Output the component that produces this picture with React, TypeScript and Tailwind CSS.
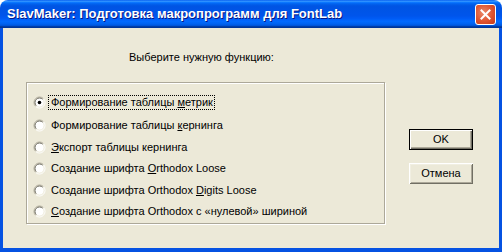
import React from "react";

function Radio({ checked, id }: { checked?: boolean; id: string }) {
  return (
    <svg width="13" height="13" viewBox="0 0 13 13" className="shrink-0">
      <defs>
        <linearGradient id={`o${id}`} x1="0" y1="0" x2="1" y2="1">
          <stop offset="0.45" stopColor="#aca899" />
          <stop offset="0.55" stopColor="#ffffff" />
        </linearGradient>
        <linearGradient id={`i${id}`} x1="0" y1="0" x2="1" y2="1">
          <stop offset="0.45" stopColor="#716f64" />
          <stop offset="0.55" stopColor="#f1efe2" />
        </linearGradient>
      </defs>
      <circle cx="6.5" cy="6.5" r="5.5" fill="none" stroke={`url(#o${id})`} strokeWidth="1" />
      <circle cx="6.5" cy="6.5" r="4.5" fill="#ffffff" stroke={`url(#i${id})`} strokeWidth="1" />
      {checked && <circle cx="6.5" cy="6.5" r="1.8" fill="#000" />}
    </svg>
  );
}

const rows: { mt: string; content: React.ReactNode; checked?: boolean; focus?: boolean }[] = [
  { mt: "mt-[12px]", checked: true, focus: true, content: <>Формирование таблицы <u>м</u>етрик</> },
  { mt: "mt-[9px]", content: <>Формирование таблицы <u>к</u>ернинга</> },
  { mt: "mt-[8px]", content: <><u>Э</u>кспорт таблицы кернинга</> },
  { mt: "mt-[7px]", content: <>Создание шрифта <u>O</u>rthodox Loose</> },
  { mt: "mt-[8px]", content: <>Создание шрифта Orthodox <u>D</u>igits Loose</> },
  { mt: "mt-[7px]", content: <><u>С</u>оздание шрифта Orthodox с «нулевой» шириной</> },
];

export default function App() {
  return (
    <div className="w-[502px] h-[252px] flex flex-col rounded-t-[8px] overflow-hidden font-['Liberation_Sans',Arial,sans-serif]">
      <div className="h-[28px] shrink-0 flex items-center justify-between pl-[7px] pr-[6px] bg-[linear-gradient(to_bottom,#0058ee_0%,#3593ff_4%,#288eff_6%,#127dff_8%,#036ffc_10%,#0262ee_14%,#0057e5_20%,#0054e3_24%,#0055eb_56%,#005bf5_66%,#026afe_76%,#0062ef_86%,#0052d6_92%,#0040ab_94%,#003092_100%)]">
        <span className="text-white text-[13px] font-bold leading-[16px] [text-shadow:1px_1px_#0a1883]">
          SlavMaker: Подготовка макропрограмм для FontLab
        </span>
        <div className="w-[21px] h-[21px] rounded-[3px] border border-white flex items-center justify-center bg-[radial-gradient(circle_at_40%_40%,#e98a6c_0%,#e0532f_55%,#c2391c_100%)]">
          <svg width="11" height="11" viewBox="0 0 11 11">
            <path d="M1.5 1.5 L9.5 9.5 M9.5 1.5 L1.5 9.5" stroke="#fff" strokeWidth="2" strokeLinecap="square" />
          </svg>
        </div>
      </div>
      <div className="flex-1 flex bg-[#ece9d8] border-l-[3px] border-r-[3px] border-b-[4px] border-[#0552e2] text-black text-[11px] leading-[13px]">
        <div className="pl-[23px] flex flex-col">
          <div className="mt-[23px] h-[13px] pl-[103px] whitespace-nowrap">Выберите нужную функцию:</div>
          <div className="mt-[18px] w-[359px] h-[142px] border border-[#aca899] shadow-[inset_1px_1px_0_#ffffff,1px_1px_0_#ffffff] flex flex-col">
            {rows.map((r, i) => (
              <div key={i} className={`${r.mt} h-[14px] flex items-center pl-[6px]`}>
                <Radio checked={r.checked} id={`r${i}`} />
                <span
                  className={`ml-[2px] pl-[2px] pr-[1px] h-[15px] leading-[13px] whitespace-nowrap border ${
                    r.focus ? "border-dotted border-black" : "border-transparent"
                  }`}
                >
                  {r.content}
                </span>
              </div>
            ))}
          </div>
        </div>
        <div className="ml-[24px] mt-[101px] flex flex-col">
          <div className="w-[64px] h-[21px] border border-black">
            <div className="w-full h-full flex items-center justify-center shadow-[inset_1px_1px_0_#ffffff,inset_-1px_-1px_0_#716f64,inset_-2px_-2px_0_#aca899]">
              OK
            </div>
          </div>
          <div className="mt-[13px] w-[64px] h-[21px] flex items-center justify-center shadow-[inset_1px_1px_0_#ffffff,inset_-1px_-1px_0_#716f64,inset_2px_2px_0_#f1efe2,inset_-2px_-2px_0_#aca899]">
            Отмена
          </div>
        </div>
      </div>
    </div>
  );
}
